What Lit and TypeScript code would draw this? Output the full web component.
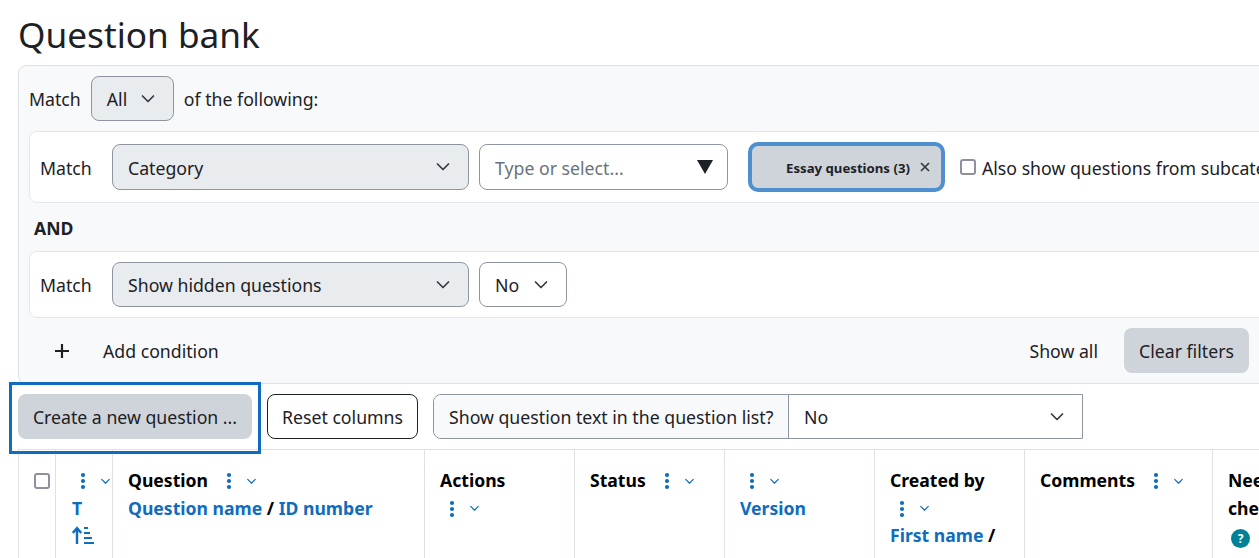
import { LitElement, html, css } from "lit";
import { customElement } from "lit/decorators.js";

const chevron = (cls: string) => html`<svg class=${cls} viewBox="0 0 16 16" fill="none" stroke="currentColor" stroke-width="1.7" stroke-linecap="round" stroke-linejoin="round"><path d="M2.5 5 L8 10.5 L13.5 5"/></svg>`;
const kebab = html`<svg class="kebab" viewBox="0 0 6 18" fill="currentColor"><circle cx="3" cy="3" r="2.1"/><circle cx="3" cy="9" r="2.1"/><circle cx="3" cy="15" r="2.1"/></svg>`;
const menu = html`<span class="menu">${kebab}${chevron("chev-sm")}</span>`;
const menuAfter = html`<span class="menu after">${kebab}${chevron("chev-sm")}</span>`;

@customElement("app-root")
export class AppRoot extends LitElement {
  static styles = css`
    :host { display: block; width: 1259px; height: 558px; overflow: hidden; position: relative; background: #fff; color: #1d2125; font-family: "Noto Sans", sans-serif; font-size: 17.7px; }
    * { box-sizing: border-box; }
    h1 { margin: 0; padding: 10px 0 0 18px; height: 65px; font-weight: 400; font-size: 35.2px; line-height: 48px; }
    .filters { margin-left: 18px; width: 1262px; height: 319px; background: #f8f9fa; border: 1px solid #dee2e6; border-radius: 8px; padding: 10px 10px 0; overflow: hidden; }
    .top { display: flex; align-items: center; height: 45px; gap: 10px; margin-bottom: 10px; }
    .sel { display: flex; align-items: center; justify-content: space-between; height: 46px; padding: 0 17px 0 15px; border: 1px solid #8f959e; border-radius: 8px; background: #fff; white-space: nowrap; flex: none; }
    .sel.grey { background: #e9ecef; }
    .chev { width: 16px; height: 16px; color: #343a40; flex: none; }
    .all { width: 83px; height: 45px; }
    .cat { width: 357px; }
    .type { width: 249px; margin-left: 10px; padding-right: 15px; color: #6a737b; }
    .tri { width: 0; height: 0; border-left: 8px solid transparent; border-right: 8px solid transparent; border-top: 14px solid #1d2125; margin-right: -1px; }
    .cond { display: flex; align-items: center; background: #fff; border: 1px solid #e3e6ea; border-radius: 8px; padding-left: 10px; margin-right: -30px; }
    .c1 { height: 72px; }
    .c1 .lbl, .c1 .opt, .c1 .sel, .c1 .chip { padding-top: 2px; }
    .c1 .chev, .c1 .tri, .c1 .x { margin-top: -2px; }
    .c2 { height: 67px; }
    .lbl { width: 72px; flex: none; }
    .no { width: 88px; height: 45px; margin-left: 10px; }
    .c2 .cat { height: 45px; }
    .chip { display: flex; align-items: center; width: 197px; height: 50px; margin-left: 20px; padding-left: 34px; border: 4px solid #4d90cd; border-radius: 10px; background: #ced4da; font-weight: 700; font-size: 13.2px; flex: none; white-space: nowrap; }
    .chip .x { margin-left: 10px; width: 10px; height: 10px; color: #343a40; flex: none; }
    .check { width: 16px; height: 16px; margin-left: 15px; margin-right: 6px; border: 2px solid #8f8f9d; border-radius: 3px; background: #fff; flex: none; }
    .opt { white-space: nowrap; }
    .and { height: 48px; padding: 13px 0 0 5px; font-weight: 700; line-height: 24px; font-size: 17.6px; }
    .foot { display: flex; align-items: center; height: 65px; padding: 0 0 0 24px; margin-right: -10px; }
    .plus { width: 18px; height: 18px; margin-right: 32px; }
    .grow { flex: 1; }
    .showall { margin-right: 26px; }
    .clear { display: flex; align-items: center; justify-content: center; width: 125px; height: 45px; background: #ced4da; border-radius: 8px; margin-right: 30px; }
    .bar { display: flex; align-items: center; height: 65px; padding-left: 18px; }
    .btn { display: flex; align-items: center; justify-content: center; height: 45px; border-radius: 8px; white-space: nowrap; }
    .create { width: 234px; background: #ced4da; }
    .reset { width: 151px; margin-left: 15px; background: #fff; border: 1px solid #1d2125; }
    .group { display: flex; margin-left: 15px; height: 45px; width: 650px; border: 1px solid #8f959e; border-radius: 8px 0 0 8px; }
    .gl { display: flex; align-items: center; width: 355px; padding-left: 15px; background: #f8f9fa; border-right: 1px solid #8f959e; border-radius: 8px 0 0 8px; white-space: nowrap; }
    .gs { display: flex; flex: 1; align-items: center; justify-content: space-between; padding: 0 17px 0 15px; }
    .outline { position: absolute; left: 9px; top: 382px; width: 252px; height: 72px; border: 3px solid #0f6cbf; }
    .table { display: grid; grid-template-columns: 37px 57px 312px 150px 150px 150px 150px 188px 60px; margin-left: 18px; border-top: 1px solid #dee2e6; height: 120px; line-height: 27.5px; font-weight: 700; font-size: 17.6px; color: #000; overflow: hidden; }
    .th { border-left: 1px solid #dee2e6; padding: 17px 0 0 15px; min-width: 0; white-space: nowrap; overflow: hidden; }
    .th.first { padding: 23px 0 0 15px; }
    .th.narrow { padding-left: 16px; }
    .cb { display: block; width: 16px; height: 16px; border: 2px solid #8f8f9d; border-radius: 3px; background: #fff; }
    .link { color: #0f6cbf; }
    .menu { display: inline-flex; align-items: center; gap: 14px; vertical-align: middle; color: #0f6cbf; position: relative; top: -1px; }
    .own { display: block; line-height: 27.5px; height: 27.5px; }
    .own .menu { margin-left: 9px; }
    .own .menu.after { margin-left: 18px; }
    .kebab { width: 6px; height: 18px; display: block; }
    .chev-sm { width: 11px; height: 11px; display: block; }
    .sort { width: 22px; height: 20px; display: block; color: #0f6cbf; margin-top: 3px; }
    .help { display: flex; align-items: center; justify-content: center; width: 19px; height: 19px; border-radius: 50%; background: #008196; color: #fff; font-size: 12px; line-height: 19px; margin: 7px 0 0 3px; font-weight: 700; }
    .th.narrow .own .menu { margin-left: 8px; }
  `;

  render() {
    return html`
      <h1>Question bank</h1>
      <div class="filters">
        <div class="top">
          <span>Match</span>
          <div class="sel grey all">All ${chevron("chev")}</div>
          <span>of the following:</span>
        </div>
        <div class="cond c1">
          <span class="lbl">Match</span>
          <div class="sel grey cat">Category ${chevron("chev")}</div>
          <div class="sel type">Type or select... <span class="tri"></span></div>
          <div class="chip">Essay questions (3)
            <svg class="x" viewBox="0 0 10 10" stroke="currentColor" stroke-width="1.7" fill="none"><path d="M1 1 L9 9 M9 1 L1 9"/></svg>
          </div>
          <span class="check"></span>
          <span class="opt">Also show questions from subcategories</span>
        </div>
        <div class="and">AND</div>
        <div class="cond c2">
          <span class="lbl">Match</span>
          <div class="sel grey cat">Show hidden questions ${chevron("chev")}</div>
          <div class="sel no">No ${chevron("chev")}</div>
        </div>
        <div class="foot">
          <svg class="plus" viewBox="0 0 18 18" stroke="#1d2125" stroke-width="2.2"><path d="M9 2 V16 M2 9 H16"/></svg>
          <span>Add condition</span>
          <span class="grow"></span>
          <span class="showall">Show all</span>
          <div class="clear">Clear filters</div>
        </div>
      </div>
      <div class="bar">
        <div class="btn create">Create a new question ...</div>
        <div class="btn reset">Reset columns</div>
        <div class="group">
          <div class="gl">Show question text in the question list?</div>
          <div class="gs">No ${chevron("chev")}</div>
        </div>
      </div>
      <div class="outline"></div>
      <div class="table">
        <div class="th first"><span class="cb"></span></div>
        <div class="th narrow">
          <span class="own">${menu}</span>
          <span class="own link">T</span>
          <svg class="sort" viewBox="0 0 22 20" fill="currentColor"><path d="M5 19 V4.5 M0.8 8 L5 3 L9.2 8" fill="none" stroke="currentColor" stroke-width="2.4"/><rect x="12" y="2" width="4" height="2"/><rect x="12" y="7" width="6" height="2"/><rect x="12" y="12" width="8" height="2"/><rect x="12" y="17" width="10" height="2"/></svg>
        </div>
        <div class="th"><span class="own">Question${menuAfter}</span><span class="own"><span class="link">Question name</span> / <span class="link">ID number</span></span></div>
        <div class="th"><span class="own">Actions</span><span class="own">${menu}</span></div>
        <div class="th"><span class="own">Status${menuAfter}</span></div>
        <div class="th"><span class="own">${menu}</span><span class="own link">Version</span></div>
        <div class="th"><span class="own">Created by</span><span class="own">${menu}</span><span class="own"><span class="link">First name</span> /</span></div>
        <div class="th"><span class="own">Comments${menuAfter}</span></div>
        <div class="th"><span class="own">Needs</span><span class="own">checking?</span><span class="help">?</span></div>
      </div>
    `;
  }
}
